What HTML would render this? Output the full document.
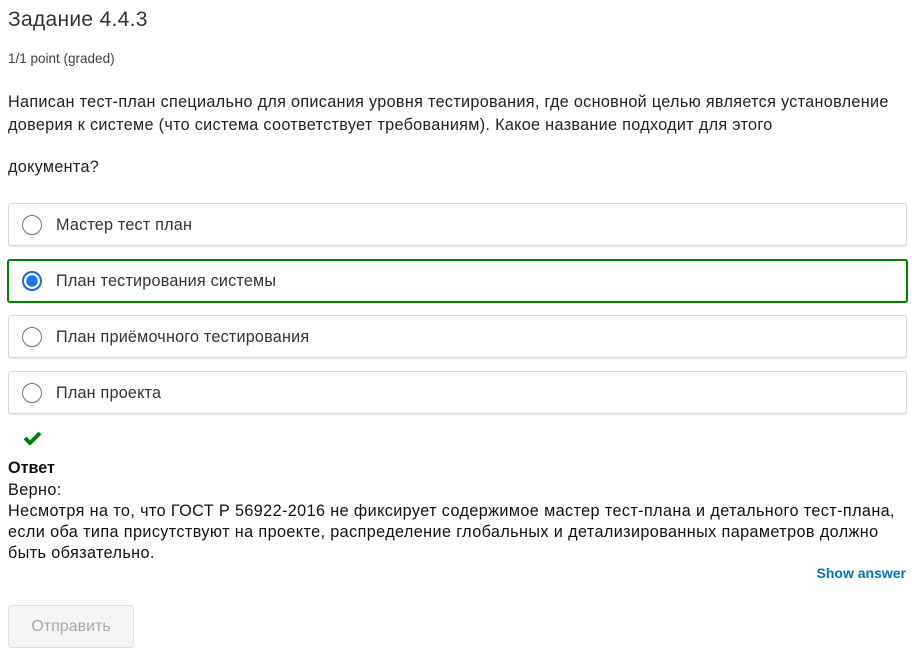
<!DOCTYPE html>
<html><head><meta charset="utf-8"><style>
body{margin:0;width:912px;height:662px;background:#fff;font-family:"Liberation Sans",sans-serif;color:#313131;position:relative;overflow:hidden}
.a{position:absolute;white-space:nowrap}
.f{font-size:16.2px;letter-spacing:0.32px}
.opt{position:absolute;left:8px;width:897px;height:41px;border:1px solid #d9d9d9;border-radius:3px;box-shadow:0 1px 1px #e8e8e8}
.opt .r{position:absolute;left:13px;top:11px;width:20px;height:20px;border:1px solid #767676;border-radius:50%;box-sizing:border-box}
.opt .t{position:absolute;left:47px;top:12px;font-size:16.2px;letter-spacing:0.2px;color:#333}
</style></head><body>
<div class="a" style="left:8px;top:8px;font-size:21px;letter-spacing:0.3px;color:#333">Задание 4.4.3</div>
<div class="a" style="left:8px;top:51px;font-size:13.5px;color:#414141">1/1 point (graded)</div>
<div class="a f" style="left:8px;top:91px;line-height:23px;color:#222">Написан тест-план специально для описания уровня тестирования, где основной целью является установление<br>доверия к системе (что система соответствует требованиям). Какое название подходит для этого</div>
<div class="a f" style="left:8px;top:158px;color:#222">документа?</div>
<div class="opt" style="top:203px"><div class="r"></div><div class="t">Мастер тест план</div></div>
<div class="opt" style="top:259px;border:2px solid #008100;left:7px;width:897px;height:40px"><div class="r" style="left:13px;top:10px;border:2px solid #1f63e6;background:radial-gradient(circle,#1a73f5 0 5.5px,#fff 6px)"></div><div class="t" style="top:11px">План тестирования системы</div></div>
<div class="opt" style="top:315px"><div class="r"></div><div class="t">План приёмочного тестирования</div></div>
<div class="opt" style="top:371px"><div class="r"></div><div class="t">План проекта</div></div>
<svg class="a" style="left:23px;top:430px" width="19" height="15" viewBox="0 0 19 15"><path d="M2 8 L7 13 L17 3" stroke="#008100" stroke-width="4" fill="none"/></svg>
<div class="a f" style="left:8px;top:459px;font-weight:bold;letter-spacing:0;color:#111">Ответ</div>
<div class="a f" style="left:8px;top:480px;line-height:21px;letter-spacing:0.4px;color:#111">Верно:<br>Несмотря на то, что ГОСТ Р 56922-2016 не фиксирует содержимое мастер тест-плана и детального тест-плана,<br>если оба типа присутствуют на проекте, распределение глобальных и детализированных параметров должно<br>быть обязательно.</div>
<div class="a" style="right:6px;top:565px;font-size:14px;font-weight:bold;color:#0075b4">Show answer</div>
<div class="a" style="left:8px;top:605px;width:126px;height:43px;border:1px solid #e0e0e0;border-radius:3px;background:#f5f5f5;box-sizing:border-box;font-size:16px;color:#a8a8a8;text-align:center;line-height:41px">Отправить</div>
</body></html>
